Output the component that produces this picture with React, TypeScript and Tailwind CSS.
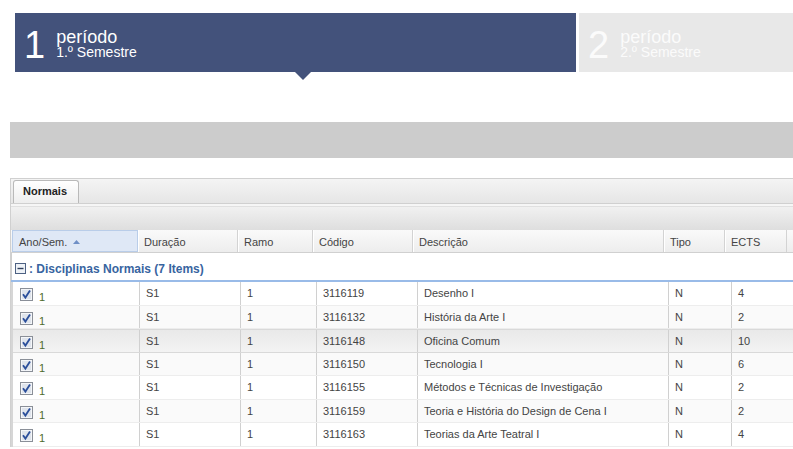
import React from "react";

const headerCols = [
  { label: "Duração", w: "w-[100px]" },
  { label: "Ramo", w: "w-[75px]" },
  { label: "Código", w: "w-[100px]" },
  { label: "Descrição", w: "w-[251px]" },
  { label: "Tipo", w: "w-[61px]" },
  { label: "ECTS", w: "w-[62px]" },
];

const rows = [
  { codigo: "3116119", desc: "Desenho I", ects: "4" },
  { codigo: "3116132", desc: "História da Arte I", ects: "2" },
  { codigo: "3116148", desc: "Oficina Comum", ects: "10" },
  { codigo: "3116150", desc: "Tecnologia I", ects: "6" },
  { codigo: "3116155", desc: "Métodos e Técnicas de Investigação", ects: "2" },
  { codigo: "3116159", desc: "Teoria e História do Design de Cena I", ects: "2" },
  { codigo: "3116163", desc: "Teorias da Arte Teatral I", ects: "4" },
];

function Checkbox() {
  return (
    <svg width="13" height="13" viewBox="0 0 13 13" className="shrink-0">
      <rect x="0.5" y="0.5" width="12" height="12" fill="#dfe4ec" stroke="#8a8f98" />
      <rect x="1.5" y="1.5" width="10" height="10" fill="none" stroke="#f4f6f9" />
      <path d="M3 6.2 L5.4 9.6 L10 2.6" fill="none" stroke="#2b4f9b" strokeWidth="1.8" />
    </svg>
  );
}

function Period({ n, sem, active }: { n: string; sem: string; active?: boolean }) {
  return (
    <div
      className={
        active
          ? "relative w-[561px] h-[59px] bg-[#43527b] flex items-start pl-[9px] text-white"
          : "relative flex-1 h-[59px] bg-[#e8e8e8] flex items-start pl-[9px] text-[#fbfbfb]"
      }
    >
      <div className="pt-[13px] text-[38px] leading-none">{n}</div>
      <div className="pt-[16px] pl-[11px]">
        <div className="text-[18px] leading-[16px]">período</div>
        <div className="text-[14px] leading-[14px]">{sem}</div>
      </div>
      {active && (
        <div className="absolute left-[280px] top-full w-0 h-0 border-l-[8px] border-r-[8px] border-t-[8px] border-l-transparent border-r-transparent border-t-[#43527b]" />
      )}
    </div>
  );
}

export default function App() {
  return (
    <div className="w-[793px] h-[449px] overflow-hidden bg-white font-['Liberation_Sans']">
      <div className="pt-[13px] pl-[15px] flex gap-[3px]">
        <Period n="1" sem="1.º Semestre" active />
        <Period n="2" sem="2.º Semestre" />
      </div>

      <div className="mt-[50px] ml-[10px] h-[36px] bg-[#cccccc]" />

      <div className="mt-[20px] ml-[10px] border-l border-[#d0d0d0]">
        {/* tab strip */}
        <div className="h-[26px] border-t border-b border-[#d0d0d0] bg-gradient-to-b from-[#f4f4f4] to-[#e6e6e6] flex items-end pl-[2px]">
          <div className="w-[66px] h-[23px] rounded-t-[3px] border border-b-0 border-[#b9b9b9] bg-gradient-to-b from-[#ffffff] to-[#eeeeee] text-[11px] font-bold text-[#222] pl-[9px] pt-[4px] leading-[13px]">
            Normais
          </div>
        </div>
        <div className="h-[2px] bg-[#f6f6f6]" />
        {/* toolbar */}
        <div className="h-[24px] border-t border-[#e0e0e0] bg-gradient-to-b from-[#f1f1f1] to-[#dedede]" />

        {/* header */}
        <div className="h-[23px] flex pl-[1px] bg-gradient-to-b from-[#fafafa] to-[#ededed] border-b border-[#d0d0d0] text-[11px] text-[#444]">
          <div className="w-[126px] h-full flex items-center gap-[6px] pl-[6px] pt-[2px] bg-[#dfe8f6] border border-[#b9cde9]">
            <span>Ano/Sem.</span>
            <svg width="7" height="4" viewBox="0 0 7 4">
              <polygon points="0,4 7,4 3.5,0" fill="#6f8fc6" />
            </svg>
          </div>
          {headerCols.map((c) => (
            <div
              key={c.label}
              className={`${c.w} h-full flex items-center pl-[6px] pt-[2px] border-r border-[#d3d3d3] shadow-[inset_1px_0_0_#ffffff]`}
            >
              {c.label}
            </div>
          ))}
          <div className="flex-1" />
        </div>

        {/* group header */}
        <div className="h-[27px] flex items-center pl-[3px] pt-[4px] border-l border-[#cfcfcf]">
          <svg width="11" height="11" viewBox="0 0 11 11" className="shrink-0">
            <rect x="0.5" y="0.5" width="10" height="10" fill="#eef2f7" stroke="#4d6183" />
            <line x1="2.5" y1="5.5" x2="8.5" y2="5.5" stroke="#2f3f5c" strokeWidth="1.4" />
          </svg>
          <span className="ml-[3px] text-[12px] font-bold text-[#3764a0]">: Disciplinas Normais (7 Items)</span>
        </div>
        <div className="h-[2px] bg-[#99bbe8]" />

        {/* rows */}
        <div className="border-l-2 border-[#d6d6d6] text-[11px] text-[#444]">
          {rows.map((r, i) => (
            <div
              key={r.codigo}
              className={
                i === 2
                  ? "h-[23.5px] flex border-t border-b border-[#d9d9d9] bg-gradient-to-b from-[#e9e9e9] to-[#f3f3f3]"
                  : i % 2 === 1
                  ? "h-[23.5px] flex border-b border-[#ededed] bg-[#fafafa]"
                  : "h-[23.5px] flex border-b border-[#ededed] bg-white"
              }
            >
              <div className="w-[127px] flex items-start pl-[7px] pt-[6px] border-r border-[#d0d0d0]">
                <Checkbox />
                <span className="ml-[6px] pt-[3px] leading-[13px] text-[#4e6b2c]">1</span>
              </div>
              <div className="w-[101px] pl-[6px] pt-[5px] leading-[13px] border-r border-[#d0d0d0]">S1</div>
              <div className="w-[76px] pl-[6px] pt-[5px] leading-[13px] border-r border-[#d0d0d0]">1</div>
              <div className="w-[101px] pl-[6px] pt-[5px] leading-[13px] border-r border-[#d0d0d0]">{r.codigo}</div>
              <div className="w-[251px] pl-[6px] pt-[5px] leading-[13px] border-r border-[#d0d0d0]">{r.desc}</div>
              <div className="w-[63px] pl-[6px] pt-[5px] leading-[13px] border-r border-[#d0d0d0]">N</div>
              <div className="flex-1 pl-[6px] pt-[5px] leading-[13px]">{r.ects}</div>
            </div>
          ))}
        </div>
      </div>
    </div>
  );
}
